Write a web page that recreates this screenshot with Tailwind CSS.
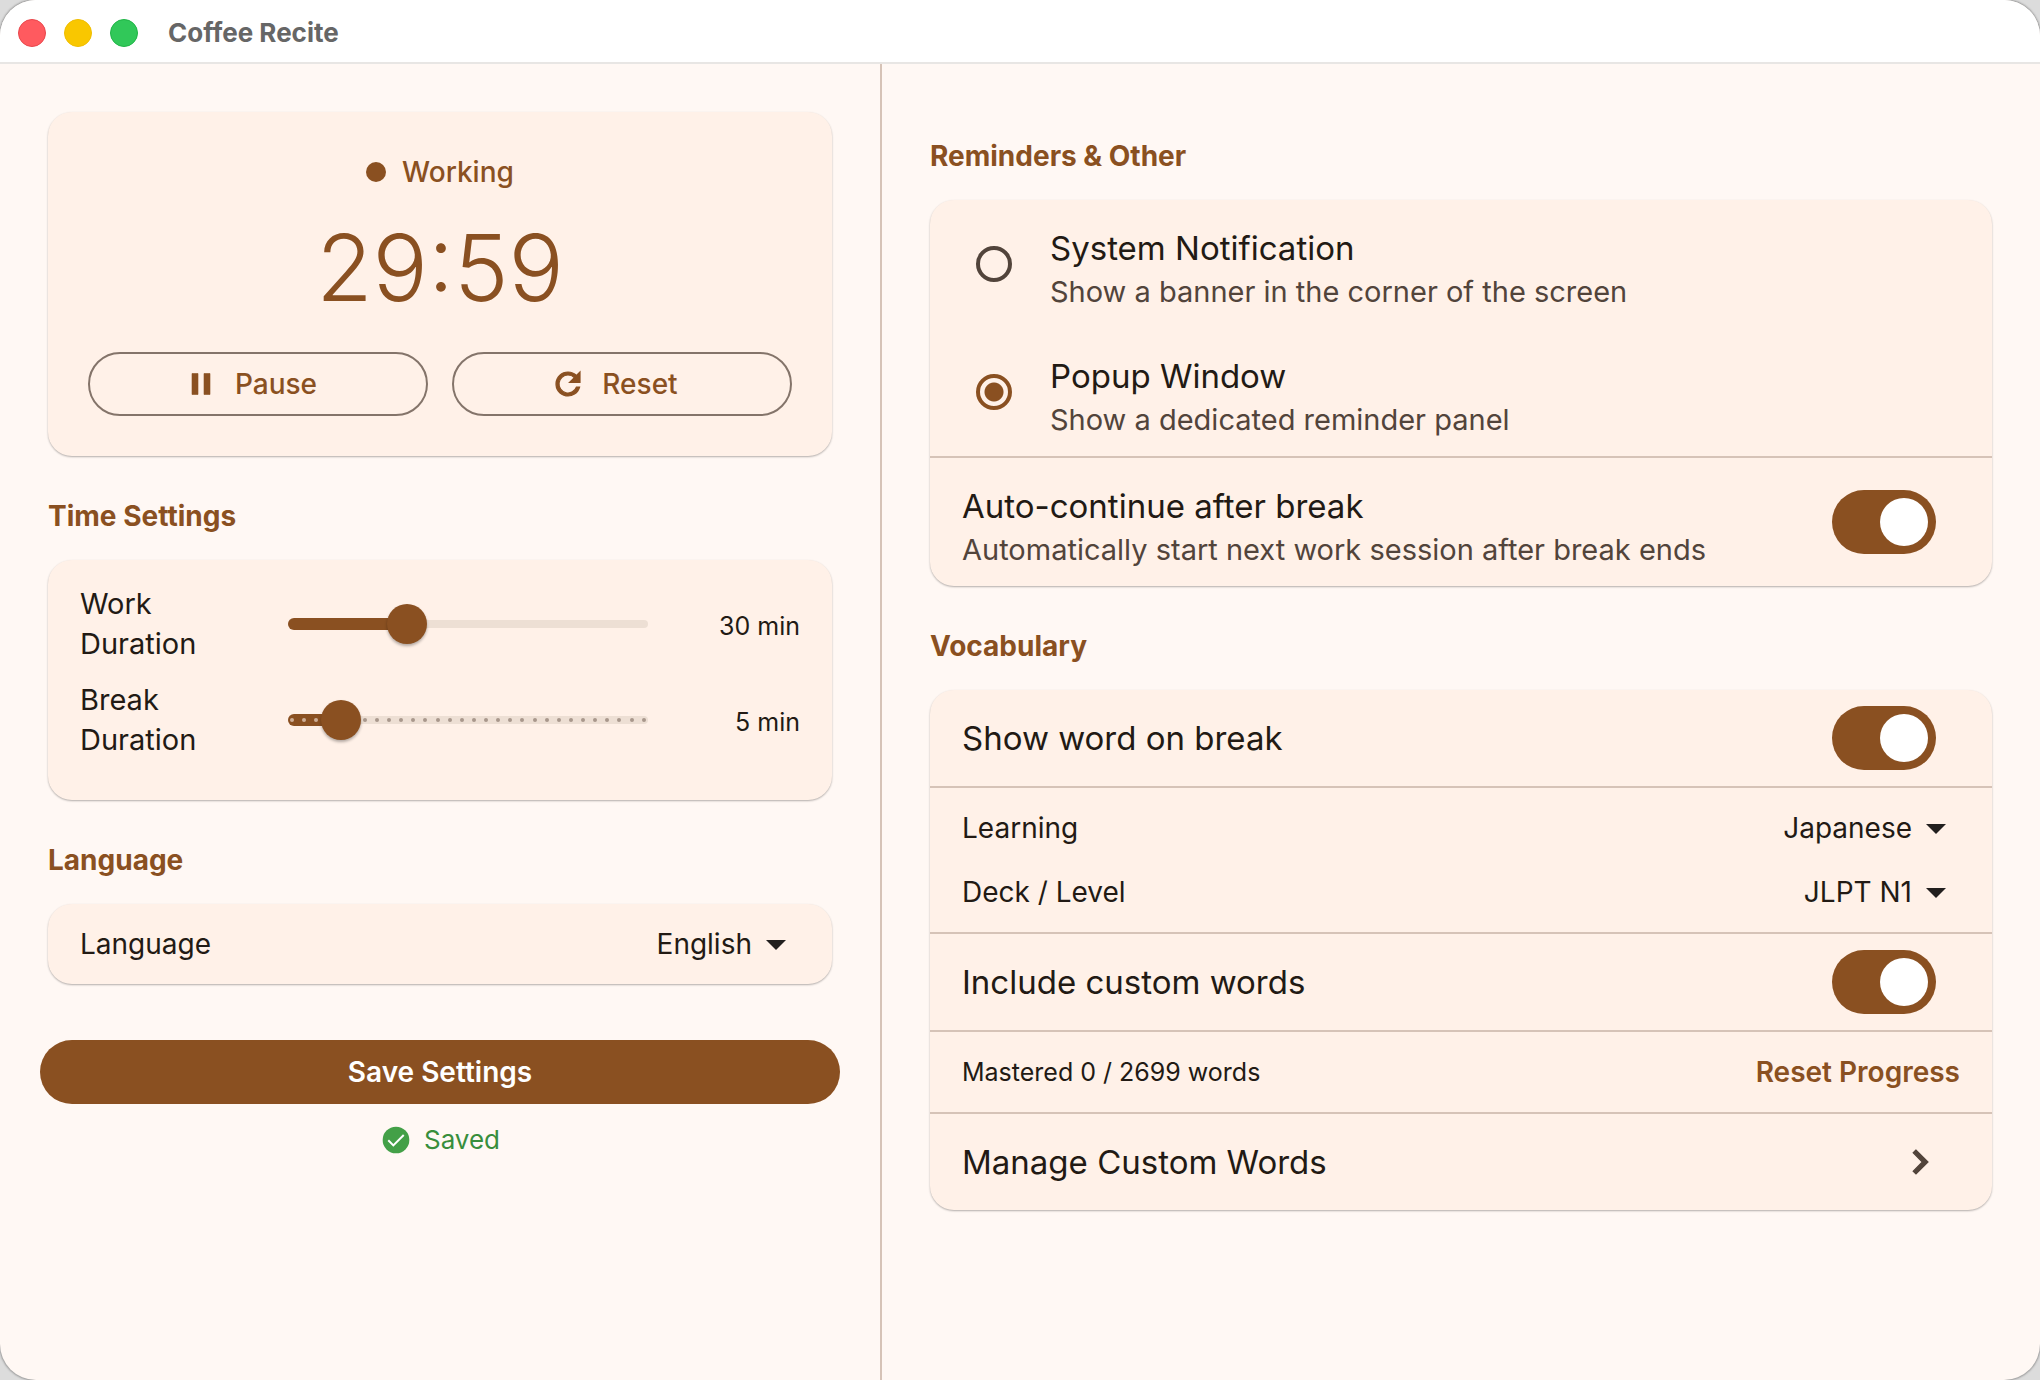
<!DOCTYPE html>
<html lang="en">
  <head>
    <meta charset="utf-8" />
    <meta name="viewport" content="width=device-width, initial-scale=1.0" />
    <title>Coffee Recite</title>
    <script src="https://cdn.jsdelivr.net/npm/@tailwindcss/browser@4"></script>
  </head>
  <body class="bg-[#dcdcdc] font-['Inter',sans-serif] text-[28px] leading-10 text-[#221a14]">
    <div class="flex min-h-screen flex-col overflow-hidden rounded-[36px] bg-[#fff8f4] shadow-[0_0_2px_1px_#9a9a9a]">
      <header class="flex h-16 items-center border-b-2 border-[#e8e6e4] bg-white pt-1 pl-[18px]">
        <div class="flex gap-[18px]">
          <button aria-label="Close" class="size-7 rounded-full border border-[#e8474c] bg-[#ff5a5f]"></button>
          <button aria-label="Minimize" class="size-7 rounded-full border border-[#efbd00] bg-[#f9c700]"></button>
          <button aria-label="Zoom" class="size-7 rounded-full border border-[#1fb446] bg-[#31c859]"></button>
        </div>
        <h1 class="ml-[30px] text-[26px] font-bold text-[#666666]">Coffee Recite</h1>
      </header>

      <main class="flex flex-1">
        <!-- timer and basic settings -->
        <div class="w-[882px] border-r-2 border-[#d6c3b7] px-10 pt-12">
          <section class="mx-2 rounded-3xl bg-[#fff1e8] p-10 shadow-[0_1px_2px_rgba(0,0,0,0.3)]">
            <div class="flex items-center justify-center gap-4 font-medium text-[#8a5021]">
              <span class="size-5 rounded-full bg-[#8a5021]"></span>
              Working
            </div>
            <div class="mt-6 mb-8 text-center text-[92px] leading-[104px] font-[350] text-[#8a5021]">29:59</div>
            <div class="flex gap-6">
              <button class="flex h-16 flex-1 items-center justify-center gap-4 rounded-full border-2 border-[#84746a] pr-4 font-medium text-[#8a5021]">
                <svg class="size-9" viewBox="0 0 24 24" fill="currentColor" stroke="currentColor" stroke-width="0.4"><path d="M6 19h4V5H6v14zm8-14v14h4V5h-4z" /></svg>
                Pause
              </button>
              <button class="flex h-16 flex-1 items-center justify-center gap-4 rounded-full border-2 border-[#84746a] pr-4 font-medium text-[#8a5021]">
                <svg class="size-9" viewBox="0 0 24 24" fill="currentColor" stroke="currentColor" stroke-width="0.8"><path d="M17.65 6.35A7.95 7.95 0 0 0 12 4a8 8 0 1 0 7.73 10h-2.08A6 6 0 1 1 12 6c1.66 0 3.14.69 4.22 1.78L13 11h7V4l-2.35 2.35z" /></svg>
                Reset
              </button>
            </div>
          </section>

          <h2 class="mx-2 mt-10 mb-6 font-bold text-[#8a5021]">Time Settings</h2>
          <section class="mx-2 flex flex-col gap-4 rounded-3xl bg-[#fff1e8] px-8 pt-6 pb-10 shadow-[0_1px_2px_rgba(0,0,0,0.3)]">
            <div class="flex items-center">
              <label for="work" class="w-40 text-[29px]">Work Duration</label>
              <div class="flex-1 px-12">
                <div class="relative flex h-10 items-center">
                  <div class="h-2 w-full rounded-full bg-[#eddfd4]"></div>
                  <div class="absolute left-0 h-3 rounded-full bg-[#8a5021]" style="width: 33%"></div>
                  <input id="work" type="range" min="1" max="90" value="30" class="absolute -inset-x-4 h-10 appearance-none bg-transparent [&::-webkit-slider-thumb]:size-10 [&::-webkit-slider-thumb]:appearance-none [&::-webkit-slider-thumb]:rounded-full [&::-webkit-slider-thumb]:bg-[#8a5021] [&::-webkit-slider-thumb]:shadow-[0_2px_3px_rgba(0,0,0,0.3)]" />
                </div>
              </div>
              <output for="work" class="w-26 pt-1 text-right text-[25px]">30 min</output>
            </div>
            <div class="flex items-center">
              <label for="break" class="w-40 text-[29px]">Break Duration</label>
              <div class="flex-1 px-12">
                <div class="relative flex h-10 items-center">
                  <div class="h-2 w-full rounded-full bg-[#eddfd4]"></div>
                  <div class="absolute left-0 h-3 rounded-full bg-[#8a5021]" style="width: 14%"></div>
                  <div id="ticks" class="absolute inset-x-[2px] flex justify-between"></div>
                  <input id="break" type="range" min="1" max="30" value="5" class="absolute -inset-x-4 h-10 appearance-none bg-transparent [&::-webkit-slider-thumb]:size-10 [&::-webkit-slider-thumb]:appearance-none [&::-webkit-slider-thumb]:rounded-full [&::-webkit-slider-thumb]:bg-[#8a5021] [&::-webkit-slider-thumb]:shadow-[0_2px_3px_rgba(0,0,0,0.3)]" />
                </div>
              </div>
              <output for="break" class="w-26 pt-1 text-right text-[25px]">5 min</output>
            </div>
          </section>

          <h2 class="mx-2 mt-10 mb-6 font-bold text-[#8a5021]">Language</h2>
          <section class="mx-2 flex h-20 items-center justify-between rounded-3xl bg-[#fff1e8] px-8 shadow-[0_1px_2px_rgba(0,0,0,0.3)]">
            <label for="language">Language</label>
            <div class="relative flex items-center">
              <select id="language" class="field-sizing-content h-12 appearance-none pr-12">
                <option>English</option>
              </select>
              <svg class="pointer-events-none absolute right-0 size-12 text-[#221f1e]" viewBox="0 0 24 24" fill="currentColor"><path d="M7 10l5 5 5-5z" /></svg>
            </div>
          </section>

          <button class="mt-14 h-16 w-full rounded-full bg-[#8a5021] font-semibold text-white">Save Settings</button>
          <div class="mt-4 flex items-center justify-center gap-3 text-[26px] text-[#388e3c]">
            <svg class="size-8" viewBox="0 0 24 24"><circle cx="12" cy="12" r="10" fill="#43a047" /><path d="M6.200 12.200L10 16l7.800-7.800" fill="none" stroke="#fff" stroke-width="1.500" /></svg>
            Saved
          </div>
        </div>

        <!-- reminders and vocabulary -->
        <div class="flex-1 px-12 pt-[72px]">
          <h2 class="mb-6 font-bold text-[#8a5021]">Reminders &amp; Other</h2>
          <section class="divide-y-2 divide-[#d6c3b7] rounded-3xl bg-[#fff1e8] shadow-[0_1px_2px_rgba(0,0,0,0.3)]">
            <div class="h-[258px]">
              <label class="flex h-32 items-center gap-[38px] pl-[46px]">
                <input type="radio" name="reminder" class="size-9 appearance-none rounded-full border-4 border-[#52443b] checked:border-[#8a5021] checked:bg-[radial-gradient(circle,#8a5021_9px,transparent_10px)]" />
                <span class="pt-2">
                  <span class="block text-[33px] leading-12">System Notification</span>
                  <span class="block text-[29px] text-[#52443b]">Show a banner in the corner of the screen</span>
                </span>
              </label>
              <label class="flex h-32 items-center gap-[38px] pl-[46px]">
                <input type="radio" name="reminder" checked class="size-9 appearance-none rounded-full border-4 border-[#52443b] checked:border-[#8a5021] checked:bg-[radial-gradient(circle,#8a5021_9px,transparent_10px)]" />
                <span class="pt-2">
                  <span class="block text-[33px] leading-12">Popup Window</span>
                  <span class="block text-[29px] text-[#52443b]">Show a dedicated reminder panel</span>
                </span>
              </label>
            </div>
            <label class="flex h-32 items-center justify-between pr-14 pl-8">
              <span class="pt-2">
                <span class="block text-[33px] leading-12">Auto-continue after break</span>
                <span class="block text-[29px] text-[#52443b]">Automatically start next work session after break ends</span>
              </span>
              <input type="checkbox" role="switch" checked class="h-16 w-26 appearance-none rounded-full bg-[#84746a] p-2 before:block before:size-12 before:rounded-full before:bg-white checked:bg-[#8a5021] checked:before:ml-auto" />
            </label>
          </section>

          <h2 class="mt-10 mb-6 font-bold text-[#8a5021]">Vocabulary</h2>
          <section class="divide-y-2 divide-[#d6c3b7] rounded-3xl bg-[#fff1e8] shadow-[0_1px_2px_rgba(0,0,0,0.3)]">
            <label class="flex items-center justify-between py-4 pr-14 pl-8 text-[33px]">
              Show word on break
              <input type="checkbox" role="switch" checked class="h-16 w-26 appearance-none rounded-full bg-[#84746a] p-2 before:block before:size-12 before:rounded-full before:bg-white checked:bg-[#8a5021] checked:before:ml-auto" />
            </label>
            <div class="px-8 py-2">
              <div class="flex h-16 items-center justify-between">
                <label for="learning">Learning</label>
                <div class="relative flex items-center">
                  <select id="learning" class="field-sizing-content h-12 appearance-none pr-12">
                    <option>Japanese</option>
                  </select>
                  <svg class="pointer-events-none absolute right-0 size-12 text-[#221f1e]" viewBox="0 0 24 24" fill="currentColor"><path d="M7 10l5 5 5-5z" /></svg>
                </div>
              </div>
              <div class="flex h-16 items-center justify-between">
                <label for="deck">Deck / Level</label>
                <div class="relative flex items-center">
                  <select id="deck" class="field-sizing-content h-12 appearance-none pr-12">
                    <option>JLPT N1</option>
                  </select>
                  <svg class="pointer-events-none absolute right-0 size-12 text-[#221f1e]" viewBox="0 0 24 24" fill="currentColor"><path d="M7 10l5 5 5-5z" /></svg>
                </div>
              </div>
            </div>
            <label class="flex items-center justify-between py-4 pr-14 pl-8 text-[33px]">
              Include custom words
              <input type="checkbox" role="switch" checked class="h-16 w-26 appearance-none rounded-full bg-[#84746a] p-2 before:block before:size-12 before:rounded-full before:bg-white checked:bg-[#8a5021] checked:before:ml-auto" />
            </label>
            <div class="flex items-center justify-between px-8 py-5">
              <span class="text-[25px]">Mastered 0 / 2699 words</span>
              <button class="font-semibold text-[#8a5021]">Reset Progress</button>
            </div>
            <button class="flex h-24 w-full items-center justify-between pr-12 pl-8 text-[33px]">
              Manage Custom Words
              <svg class="size-12 text-[#52443b]" viewBox="0 0 24 24" fill="currentColor" stroke="currentColor" stroke-width="0.6"><path d="M10 6L8.590 7.410 13.170 12l-4.580 4.590L10 18l6-6z" /></svg>
            </button>
          </section>
        </div>
      </main>
    </div>

    <script>
      const slider = document.getElementById("break");
      const ticks = document.getElementById("ticks");
      for (let i = Number(slider.min); i <= Number(slider.max); i++) {
        const tick = document.createElement("span");
        tick.className = i < slider.value ? "size-1 rounded-full bg-[#cfae95]" : "size-1 rounded-full bg-[#a8988c]";
        ticks.appendChild(tick);
      }
    </script>
  </body>
</html>
